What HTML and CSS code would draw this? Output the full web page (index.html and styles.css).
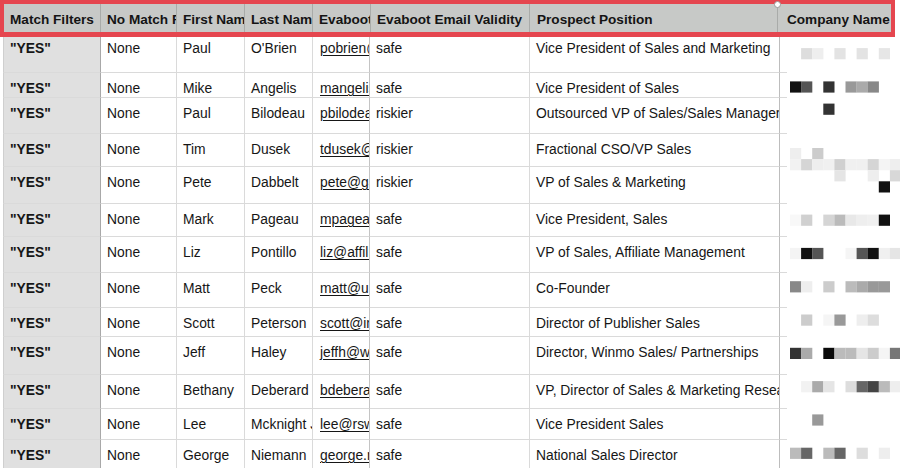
FILE: index.html
```html
<!DOCTYPE html>
<html>
<head>
<meta charset="utf-8">
<link rel="stylesheet" href="styles.css">
</head>
<body>
<div class="sheet">
  <div class="head">
    <div class="hc">Match Filters</div>
    <div class="hc">No Match Reason</div>
    <div class="hc">First Name</div>
    <div class="hc">Last Name</div>
    <div class="hc">Evaboot Email</div>
    <div class="hc">Evaboot Email Validity</div>
    <div class="hc">Prospect Position</div>
    <div class="hc">Company Name</div>
    <span class="handle"></span>
  </div>
  <div class="body">
    <div class="row"><div class="c key">"YES"</div><div class="c">None</div><div class="c">Paul</div><div class="c">O'Brien</div><div class="c mail"><a>pobrien@chatter.com</a></div><div class="c">safe</div><div class="c pos">Vice President of Sales and Marketing</div><div class="c co"></div></div>
    <div class="row"><div class="c key">"YES"</div><div class="c">None</div><div class="c">Mike</div><div class="c">Angelis</div><div class="c mail"><a>mangelis@adtech.com</a></div><div class="c">safe</div><div class="c pos">Vice President of Sales</div><div class="c co"></div></div>
    <div class="row"><div class="c key">"YES"</div><div class="c">None</div><div class="c">Paul</div><div class="c">Bilodeau</div><div class="c mail"><a>pbilodeau@media.com</a></div><div class="c">riskier</div><div class="c pos">Outsourced VP of Sales/Sales Manager</div><div class="c co"></div></div>
    <div class="row"><div class="c key">"YES"</div><div class="c">None</div><div class="c">Tim</div><div class="c">Dusek</div><div class="c mail"><a>tdusek@sales.com</a></div><div class="c">riskier</div><div class="c pos">Fractional CSO/VP Sales</div><div class="c co"></div></div>
    <div class="row"><div class="c key">"YES"</div><div class="c">None</div><div class="c">Pete</div><div class="c">Dabbelt</div><div class="c mail"><a>pete@g4media.com</a></div><div class="c">riskier</div><div class="c pos">VP of Sales &amp; Marketing</div><div class="c co"></div></div>
    <div class="row"><div class="c key">"YES"</div><div class="c">None</div><div class="c">Mark</div><div class="c">Pageau</div><div class="c mail"><a>mpageau@agency.com</a></div><div class="c">safe</div><div class="c pos">Vice President, Sales</div><div class="c co"></div></div>
    <div class="row"><div class="c key">"YES"</div><div class="c">None</div><div class="c">Liz</div><div class="c">Pontillo</div><div class="c mail"><a>liz@affiliate.com</a></div><div class="c">safe</div><div class="c pos">VP of Sales, Affiliate Management</div><div class="c co"></div></div>
    <div class="row"><div class="c key">"YES"</div><div class="c">None</div><div class="c">Matt</div><div class="c">Peck</div><div class="c mail"><a>matt@upside.com</a></div><div class="c">safe</div><div class="c pos">Co-Founder</div><div class="c co"></div></div>
    <div class="row"><div class="c key">"YES"</div><div class="c">None</div><div class="c">Scott</div><div class="c">Peterson</div><div class="c mail"><a>scott@inmedia.com</a></div><div class="c">safe</div><div class="c pos">Director of Publisher Sales</div><div class="c co"></div></div>
    <div class="row"><div class="c key">"YES"</div><div class="c">None</div><div class="c">Jeff</div><div class="c">Haley</div><div class="c mail"><a>jeffh@winmo.com</a></div><div class="c">safe</div><div class="c pos">Director, Winmo Sales/ Partnerships</div><div class="c co"></div></div>
    <div class="row"><div class="c key">"YES"</div><div class="c">None</div><div class="c">Bethany</div><div class="c">Deberard</div><div class="c mail"><a>bdeberard@media.com</a></div><div class="c">safe</div><div class="c pos">VP, Director of Sales &amp; Marketing Research</div><div class="c co"></div></div>
    <div class="row"><div class="c key">"YES"</div><div class="c">None</div><div class="c">Lee</div><div class="c">Mcknight Jr.</div><div class="c mail"><a>lee@rsw.com</a></div><div class="c">safe</div><div class="c pos">Vice President Sales</div><div class="c co"></div></div>
    <div class="row"><div class="c key">"YES"</div><div class="c">None</div><div class="c">George</div><div class="c">Niemann</div><div class="c mail"><a>george.niemann@ads.com</a></div><div class="c">safe</div><div class="c pos">National Sales Director</div><div class="c co"></div></div>
  </div>
  <svg class="pix" width="113" height="431" viewBox="0 0 113 431">
    <g>
      <rect x="14.1" y="11.1" width="11.2" height="11.2" fill="#ddd"/>
      <rect x="25.2" y="11.1" width="11.2" height="11.2" fill="#eee"/>
      <rect x="47.4" y="11.1" width="11.2" height="11.2" fill="#e3e3e3"/>
      <rect x="69.6" y="11.1" width="11.2" height="11.2" fill="#e3e3e3"/>
      <rect x="91.8" y="11.1" width="11.2" height="11.2" fill="#e6e6e6"/>

      <rect x="3" y="44.4" width="11.2" height="11.2" fill="#111"/>
      <rect x="14.1" y="44.4" width="11.2" height="11.2" fill="#555"/>
      <rect x="36.3" y="44.4" width="11.2" height="11.2" fill="#333"/>
      <rect x="58.5" y="44.4" width="11.2" height="11.2" fill="#999"/>
      <rect x="69.6" y="44.4" width="11.2" height="11.2" fill="#aaa"/>
      <rect x="80.7" y="44.4" width="11.2" height="11.2" fill="#888"/>

      <rect x="36.3" y="66.6" width="11.2" height="11.2" fill="#333"/>

      <rect x="3" y="111" width="11.2" height="11.2" fill="#eee"/>
      <rect x="25.2" y="111" width="11.2" height="11.2" fill="#ccc"/>

      <rect x="3" y="122.1" width="11.2" height="11.2" fill="#f2f2f2"/>
      <rect x="14.1" y="122.1" width="11.2" height="11.2" fill="#d5d5d5"/>
      <rect x="25.2" y="122.1" width="11.2" height="11.2" fill="#eee"/>
      <rect x="36.3" y="122.1" width="11.2" height="11.2" fill="#f0f0f0"/>
      <rect x="47.4" y="122.1" width="11.2" height="11.2" fill="#d0d0d0"/>
      <rect x="58.5" y="122.1" width="11.2" height="11.2" fill="#f0f0f0"/>
      <rect x="69.6" y="122.1" width="11.2" height="11.2" fill="#f0f0f0"/>
      <rect x="80.7" y="122.1" width="11.2" height="11.2" fill="#d5d5d5"/>
      <rect x="91.8" y="122.1" width="11.2" height="11.2" fill="#f4f4f4"/>
      <rect x="102.9" y="122.1" width="11.2" height="11.2" fill="#eee"/>

      <rect x="47.4" y="133.2" width="11.2" height="11.2" fill="#e5e5e5"/>
      <rect x="80.7" y="133.2" width="11.2" height="11.2" fill="#eee"/>
      <rect x="102.9" y="133.2" width="11.2" height="11.2" fill="#d8d8d8"/>

      <rect x="91.8" y="144.3" width="11.2" height="11.2" fill="#111"/>

      <rect x="3" y="177.6" width="11.2" height="11.2" fill="#f8f8f8"/>
      <rect x="14.1" y="177.6" width="11.2" height="11.2" fill="#d0d0d0"/>
      <rect x="36.3" y="177.6" width="11.2" height="11.2" fill="#d5d5d5"/>
      <rect x="47.4" y="177.6" width="11.2" height="11.2" fill="#bbb"/>
      <rect x="58.5" y="177.6" width="11.2" height="11.2" fill="#e8e8e8"/>
      <rect x="69.6" y="177.6" width="11.2" height="11.2" fill="#eee"/>
      <rect x="80.7" y="177.6" width="11.2" height="11.2" fill="#f0f0f0"/>
      <rect x="91.8" y="177.6" width="11.2" height="11.2" fill="#111"/>

      <rect x="3" y="210.9" width="11.2" height="11.2" fill="#f4f4f4"/>
      <rect x="14.1" y="210.9" width="11.2" height="11.2" fill="#111"/>
      <rect x="25.2" y="210.9" width="11.2" height="11.2" fill="#555"/>
      <rect x="58.5" y="210.9" width="11.2" height="11.2" fill="#f5f5f5"/>
      <rect x="69.6" y="210.9" width="11.2" height="11.2" fill="#555"/>
      <rect x="80.7" y="210.9" width="11.2" height="11.2" fill="#111"/>
      <rect x="91.8" y="210.9" width="11.2" height="11.2" fill="#f0f0f0"/>
      <rect x="102.9" y="210.9" width="11.2" height="11.2" fill="#e5e5e5"/>

      <rect x="3" y="244.2" width="11.2" height="11.2" fill="#888"/>
      <rect x="14.1" y="244.2" width="11.2" height="11.2" fill="#eee"/>
      <rect x="36.3" y="244.2" width="11.2" height="11.2" fill="#ccc"/>
      <rect x="58.5" y="244.2" width="11.2" height="11.2" fill="#bbb"/>
      <rect x="69.6" y="244.2" width="11.2" height="11.2" fill="#aaa"/>
      <rect x="80.7" y="244.2" width="11.2" height="11.2" fill="#999"/>
      <rect x="91.8" y="244.2" width="11.2" height="11.2" fill="#999"/>

      <rect x="14.1" y="277.5" width="11.2" height="11.2" fill="#ccc"/>
      <rect x="36.3" y="277.5" width="11.2" height="11.2" fill="#f5f5f5"/>
      <rect x="47.4" y="277.5" width="11.2" height="11.2" fill="#999"/>
      <rect x="69.6" y="277.5" width="11.2" height="11.2" fill="#eee"/>
      <rect x="80.7" y="277.5" width="11.2" height="11.2" fill="#ddd"/>

      <rect x="3" y="310.8" width="11.2" height="11.2" fill="#333"/>
      <rect x="14.1" y="310.8" width="11.2" height="11.2" fill="#aaa"/>
      <rect x="36.3" y="310.8" width="11.2" height="11.2" fill="#0a0a0a"/>
      <rect x="47.4" y="310.8" width="11.2" height="11.2" fill="#bbb"/>
      <rect x="58.5" y="310.8" width="11.2" height="11.2" fill="#bbb"/>
      <rect x="69.6" y="310.8" width="11.2" height="11.2" fill="#e5e5e5"/>
      <rect x="80.7" y="310.8" width="11.2" height="11.2" fill="#ccc"/>
      <rect x="91.8" y="310.8" width="11.2" height="11.2" fill="#f5f5f5"/>
      <rect x="102.9" y="310.8" width="11.2" height="11.2" fill="#777"/>

      <rect x="14.1" y="344.1" width="11.2" height="11.2" fill="#f2f2f2"/>
      <rect x="25.2" y="344.1" width="11.2" height="11.2" fill="#aaa"/>
      <rect x="36.3" y="344.1" width="11.2" height="11.2" fill="#e5e5e5"/>
      <rect x="58.5" y="344.1" width="11.2" height="11.2" fill="#ddd"/>
      <rect x="69.6" y="344.1" width="11.2" height="11.2" fill="#666"/>
      <rect x="80.7" y="344.1" width="11.2" height="11.2" fill="#444"/>
      <rect x="91.8" y="344.1" width="11.2" height="11.2" fill="#bbb"/>
      <rect x="102.9" y="344.1" width="11.2" height="11.2" fill="#eee"/>

      <rect x="25.2" y="377.4" width="11.2" height="11.2" fill="#999"/>

      <rect x="3" y="410.7" width="11.2" height="11.2" fill="#bbb"/>
      <rect x="14.1" y="410.7" width="11.2" height="11.2" fill="#666"/>
      <rect x="36.3" y="410.7" width="11.2" height="11.2" fill="#bbb"/>
      <rect x="47.4" y="410.7" width="11.2" height="11.2" fill="#666"/>
      <rect x="69.6" y="410.7" width="11.2" height="11.2" fill="#ddd"/>
      <rect x="91.8" y="410.7" width="11.2" height="11.2" fill="#eee"/>
    </g>
  </svg>
</div>
</body>
</html>
```
FILE: styles.css
```css
* { box-sizing: border-box; }
html, body { margin: 0; padding: 0; background: #fff; }
body {
  width: 900px;
  height: 468px;
  overflow: hidden;
  font-family: "Liberation Sans", Arial, Helvetica, sans-serif;
  font-size: 13.85px;
  color: #161616;
}
.sheet { position: relative; width: 900px; height: 468px; overflow: hidden; }

.head {
  position: relative;
  width: 895px;
  display: grid;
  grid-template-columns: 97px 76px 68px 68px 58px 159px 248px 113px;
  border: 4px solid #e5464f;
  border-bottom-width: 5px;
  background: #c7c9c7;
}
.hc {
  height: 28px;
  padding: 3px 6px 0;
  display: flex;
  align-items: center;
  font-size: 13.6px;
  font-weight: bold;
  white-space: nowrap;
  overflow: hidden;
  border-right: 1px solid #a9aba9;
  color: #141414;
}
.hc:nth-child(7) { padding-left: 7px; }
.hc:nth-child(8) { border-right: none; padding-left: 9px; padding-right: 0; }
.handle {
  position: absolute;
  left: 770px;
  top: -3px;
  width: 7px;
  height: 7px;
  border-radius: 50%;
  background: #fff;
  border: 1px solid #9a9a9a;
}

.body { padding-left: 3px; }
.row {
  display: grid;
  grid-template-columns: 98px 76px 68px 68px 57px 160px 250px 1fr;
  height: 33px;
}
.c {
  padding: 7px 6px 0;
  line-height: 17px;
  white-space: nowrap;
  overflow: hidden;
  border-right: 1px solid #dadada;
  border-bottom: 1px solid #dadada;
  background: #fff;
}
.c.key {
  background: #e0e0e0;
  font-weight: bold;
  border-left: 1px solid #cfcfcf;
  border-right: 1px solid #a8a8a8;
  padding-left: 6px;
}
.c.mail { border-right-color: #c4c4c4; padding-left: 7px; }
.c.mail a { text-decoration: underline; text-underline-offset: 2px; text-decoration-thickness: 1px; color: #161616; }
.c.pos { border-right-color: #bdbdbd; padding-left: 6px; padding-right: 0; }
.c.co { border-right: none; }

.row:nth-child(1) { height: 36px; }
.row:nth-child(1) .c { padding-top: 3px; }
.row:nth-child(2) { height: 25px; }
.row:nth-child(3) { height: 36px; }
.row:nth-child(4) { height: 33px; }
.row:nth-child(5) { height: 37px; }
.row:nth-child(6) { height: 33px; }
.row:nth-child(7) { height: 36px; }
.row:nth-child(8) { height: 35px; }
.row:nth-child(9) { height: 29px; }
.row:nth-child(10) { height: 38px; }
.row:nth-child(11) { height: 34px; }
.row:nth-child(12) { height: 31px; }
.row:nth-child(13) { height: 40px; }

.pix {
  position: absolute;
  left: 787px;
  top: 37px;
  background: #fff;
  display: block;
}
```
